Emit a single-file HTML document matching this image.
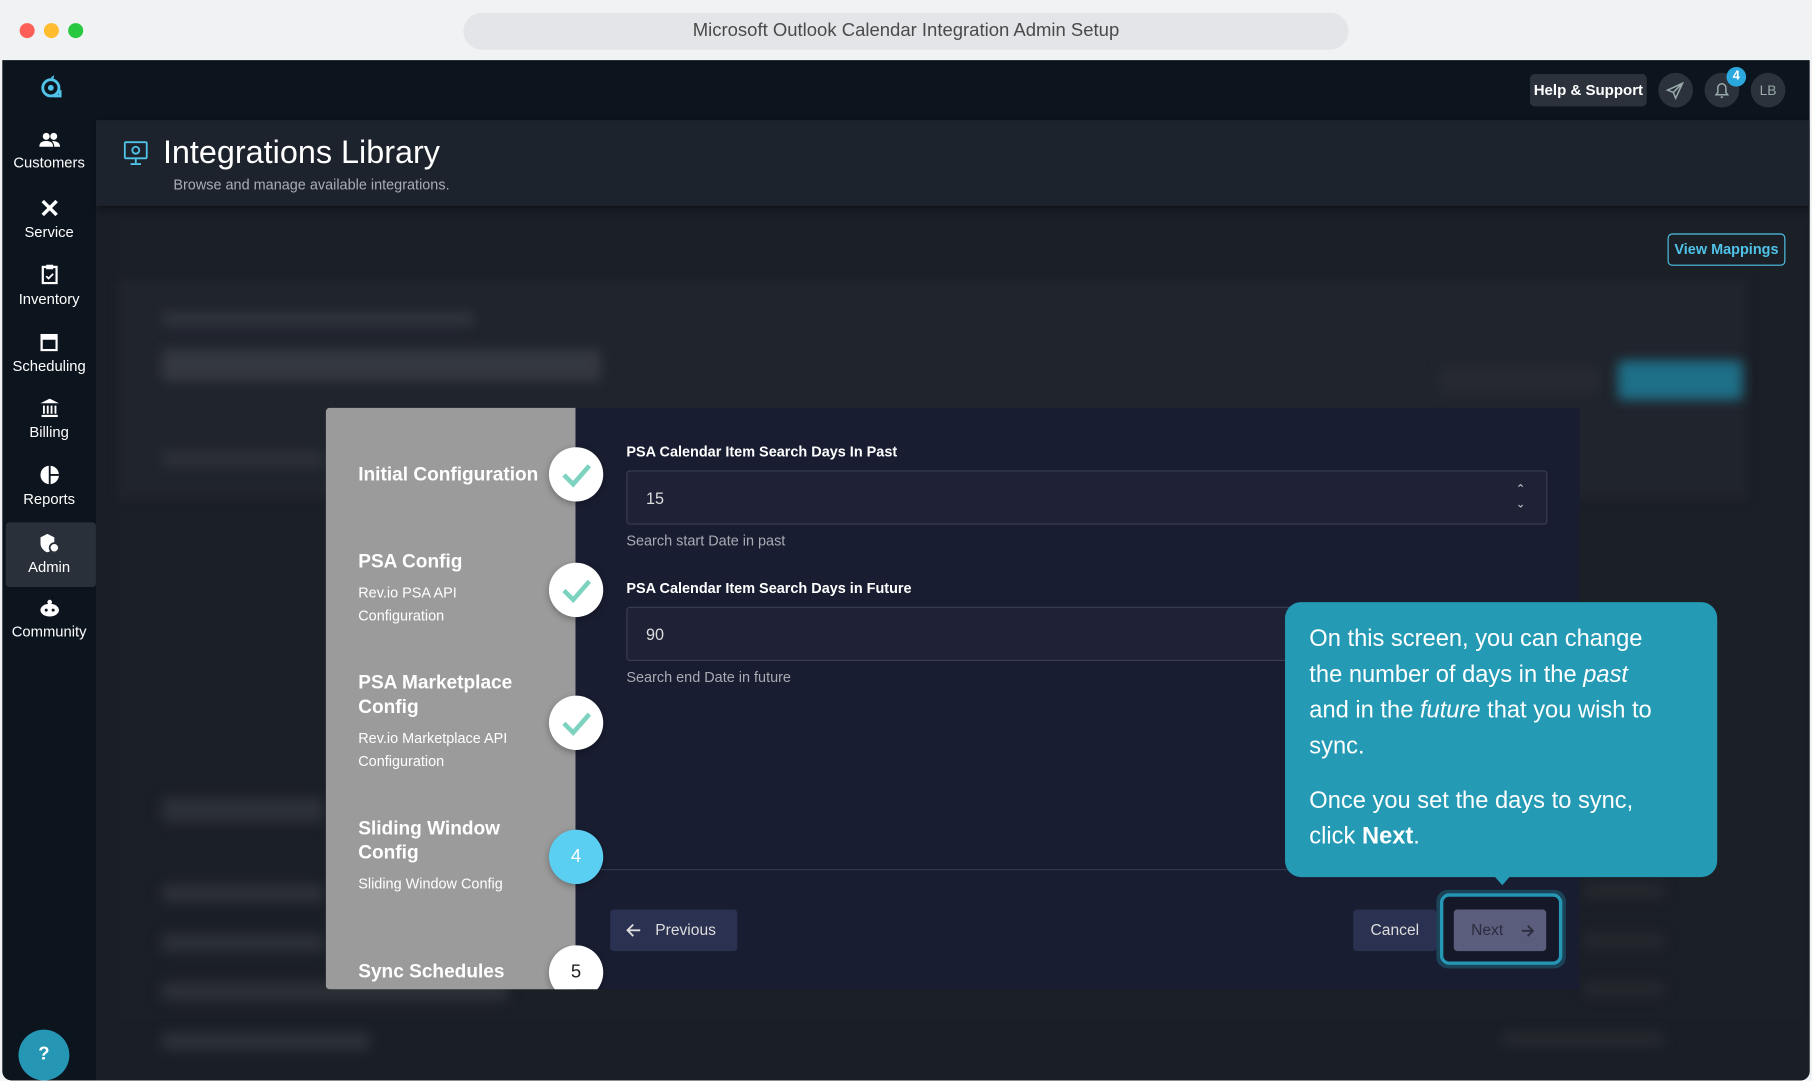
<!DOCTYPE html>
<html><head><meta charset="utf-8"><style>
*{box-sizing:border-box;margin:0;padding:0}
html,body{width:1812px;height:1080px;overflow:hidden;background:#fff}
#w{position:absolute;left:0;top:0;width:1568px;height:935px;transform:scale(1.15561);transform-origin:0 0;font-family:"Liberation Sans",sans-serif;background:#f1f2f4}
.a{position:absolute}
.dot{position:absolute;width:13px;height:13px;border-radius:50%;top:20px}
.nav{position:absolute;left:2px;width:81px;text-align:center;color:#fff;font-size:12.8px}
.nav svg{display:block;margin:0 auto 5px}
.blur{position:absolute;background:#3a3f48;filter:blur(5px);border-radius:4px}
.step{position:absolute;left:310px;color:#fff}
.step b{font-size:16.5px;display:block;line-height:21px}
.step span{font-size:12.5px;display:block;line-height:20px;margin-top:6px}
.circ{position:absolute;left:475px;width:47px;height:47px;border-radius:50%;background:#fff;box-shadow:0 2px 6px rgba(0,0,0,.3);display:flex;align-items:center;justify-content:center;font-size:16px;color:#222}
.lbl{position:absolute;left:542px;color:#fff;font-weight:bold;font-size:12.5px}
.inp{position:absolute;left:542px;width:797px;height:47px;background:#1f2236;border:1px solid #3a3e56;border-radius:3px;color:#ddd;font-size:14px;padding:15px 16px}
.hlp{position:absolute;left:542px;color:#a9abb3;font-size:12.5px}
</style></head><body><div id="w">
<div class="dot" style="left:17px;background:#fe5f57"></div>
<div class="dot" style="left:38px;background:#febc2e"></div>
<div class="dot" style="left:59px;background:#28c840"></div>
<div class="a" style="left:401px;top:11px;width:766px;height:32px;background:#e4e5e8;border-radius:16px;text-align:center;line-height:32px;font-size:16px;color:#4a4a4a">Microsoft Outlook Calendar Integration Admin Setup</div>
<div class="a" style="left:2px;top:52px;width:1564px;height:883px;background:#0c141e;overflow:hidden;border-radius:0 0 8px 8px">
 <div class="a" style="left:81px;top:52px;width:1483px;height:831px;background:#1a1f27"></div>
 <div class="a" style="left:81px;top:52px;width:1483px;height:74px;background:#1d232d;box-shadow:0 3px 6px rgba(0,0,0,.4)"></div>
 <div class="a" style="left:100px;top:140px;width:1460px;height:690px;background:#1b1f26"></div>
 <div class="a" style="left:100px;top:190px;width:1410px;height:190px;background:#20242c;filter:blur(4px)"></div>
</div>
<svg class="a" style="left:34px;top:64px" width="20" height="24" viewBox="0 0 20 24"><circle cx="10" cy="12" r="7" fill="none" stroke="#4fc3e8" stroke-width="2.5"/><circle cx="10" cy="12" r="2.5" fill="#4fc3e8"/><path d="M10 3 L13 1 L12 5Z" fill="#4fc3e8"/><path d="M12 19 H18 V14" fill="none" stroke="#4fc3e8" stroke-width="2.5"/></svg>
<div class="a" style="left:5px;top:452px;width:78px;height:56px;background:#2a3039;border-radius:3px"></div>
<div class="nav" style="top:114px"><svg width="18" height="14" viewBox="0 0 18 14"><circle cx="6" cy="4" r="3" fill="#fff"/><circle cx="12.5" cy="4" r="3" fill="#fff"/><path d="M0 13c0-4 3-5 6-5s6 1 6 5z M11 8c3 0 7 1 7 5h-5c0-2-1-4-2-5z" fill="#fff"/></svg>Customers</div>
<div class="nav" style="top:172px"><svg width="16" height="16" viewBox="0 0 16 16"><path d="M2 2l12 12M14 2L2 14" stroke="#fff" stroke-width="3"/></svg>Service</div>
<div class="nav" style="top:229px"><svg width="14" height="17" viewBox="0 0 14 17"><rect x="1" y="2" width="12" height="14" fill="none" stroke="#fff" stroke-width="2"/><rect x="4" y="0" width="6" height="4" fill="#fff"/><path d="M4 10l2 2 4-4" stroke="#fff" fill="none" stroke-width="1.5"/></svg>Inventory</div>
<div class="nav" style="top:288px"><svg width="15" height="16" viewBox="0 0 15 16"><rect x="1" y="2" width="13" height="13" fill="none" stroke="#fff" stroke-width="2"/><rect x="1" y="2" width="13" height="4" fill="#fff"/></svg>Scheduling</div>
<div class="nav" style="top:345px"><svg width="16" height="16" viewBox="0 0 16 16"><path d="M8 0L0 4h16z M1 14h14v2H1z" fill="#fff"/><path d="M3 6v7M6.3 6v7M9.6 6v7M13 6v7" stroke="#fff" stroke-width="1.6"/></svg>Billing</div>
<div class="nav" style="top:403px"><svg width="16" height="16" viewBox="0 0 16 16"><circle cx="8" cy="8" r="8" fill="#fff"/><path d="M8 0v16M8 8h8" stroke="#0c141e" stroke-width="1.6"/></svg>Reports</div>
<div class="nav" style="top:462px"><svg width="16" height="16" viewBox="0 0 16 16"><path d="M6 0l6 3v5c0 4-3 7-6 8-3-1-6-4-6-8V3z" fill="#fff"/><circle cx="12" cy="12" r="4" fill="#fff" stroke="#2a3039" stroke-width="1.5"/></svg>Admin</div>
<div class="nav" style="top:518px"><svg width="18" height="16" viewBox="0 0 18 16"><ellipse cx="9" cy="10" rx="8" ry="5.5" fill="#fff"/><circle cx="9" cy="3" r="2" fill="#fff"/><circle cx="6" cy="10" r="1.3" fill="#0c141e"/><circle cx="12" cy="10" r="1.3" fill="#0c141e"/></svg>Community</div>
<div class="a" style="left:16px;top:891px;width:44px;height:44px;border-radius:50%;background:#2596b4;color:#fff;font-weight:bold;font-size:16px;text-align:center;line-height:44px">?</div>
<div class="a" style="left:1324px;top:64px;width:101px;height:28px;background:#2c323b;border-radius:4px;color:#fff;font-weight:bold;font-size:13px;text-align:center;line-height:28px">Help &amp; Support</div>
<div class="a" style="left:1435px;top:63px;width:30px;height:30px;border-radius:50%;background:#2c323b"><svg width="30" height="30" viewBox="0 0 30 30"><path d="M21 9L8 15l5 2 2 5z M13 17l8-8" fill="none" stroke="#9aa" stroke-width="1.3"/></svg></div>
<div class="a" style="left:1475px;top:63px;width:30px;height:30px;border-radius:50%;background:#2c323b"><svg width="30" height="30" viewBox="0 0 30 30"><path d="M10 19h10l-1.5-2v-4a3.5 3.5 0 0 0-7 0v4z M14 21h2" fill="none" stroke="#9aa" stroke-width="1.3"/></svg></div>
<div class="a" style="left:1494px;top:58px;width:17px;height:17px;border-radius:50%;background:#2ba8dd;color:#fff;font-size:11px;font-weight:bold;text-align:center;line-height:17px">4</div>
<div class="a" style="left:1515px;top:63px;width:30px;height:30px;border-radius:50%;background:#2c323b;color:#9aa;font-size:12px;text-align:center;line-height:30px">LB</div>
<svg class="a" style="left:107px;top:122px" width="21" height="22" viewBox="0 0 21 22"><rect x="1" y="1" width="19" height="14" rx="1" fill="none" stroke="#4fc3e8" stroke-width="1.6"/><circle cx="10.5" cy="8" r="3" fill="none" stroke="#4fc3e8" stroke-width="1.6"/><path d="M10.5 15v4M6 20h9" stroke="#4fc3e8" stroke-width="1.6"/></svg>
<div class="a" style="left:141px;top:116px;color:#fff;font-size:28px">Integrations Library</div>
<div class="a" style="left:150px;top:153px;color:#a9adb3;font-size:12.5px">Browse and manage available integrations.</div>
<div class="a" style="left:1443px;top:202px;width:102px;height:28px;border:1px solid #4fc3e8;border-radius:4px;color:#4fc3e8;font-weight:bold;font-size:12.5px;text-align:center;line-height:26px">View Mappings</div>
<div class="blur" style="left:140px;top:270px;width:270px;height:12px;background:#30343c"></div>
<div class="blur" style="left:140px;top:302px;width:380px;height:28px;background:#34383f"></div>
<div class="blur" style="left:1245px;top:316px;width:140px;height:26px;background:#262a31"></div>
<div class="blur" style="left:1400px;top:312px;width:108px;height:34px;background:#1e6f88"></div>
<div class="blur" style="left:140px;top:390px;width:140px;height:14px;background:#2c3037"></div>
<div class="blur" style="left:140px;top:690px;width:140px;height:22px;background:#2c3037"></div>
<div class="blur" style="left:140px;top:765px;width:140px;height:16px;background:#2c3037"></div>
<div class="blur" style="left:140px;top:808px;width:140px;height:16px;background:#2c3037"></div>
<div class="blur" style="left:140px;top:850px;width:300px;height:16px;background:#2c3037"></div>
<div class="blur" style="left:140px;top:893px;width:180px;height:16px;background:#2c3037"></div>
<div class="blur" style="left:1370px;top:765px;width:70px;height:12px;background:#26292f"></div>
<div class="blur" style="left:1370px;top:808px;width:70px;height:12px;background:#26292f"></div>
<div class="blur" style="left:1370px;top:850px;width:70px;height:12px;background:#26292f"></div>
<div class="blur" style="left:1300px;top:893px;width:140px;height:12px;background:#26292f"></div>
<div class="a" style="left:282px;top:353px;width:216px;height:503px;background:#9b9b9b;border-radius:3px 0 0 3px"></div>
<div class="a" style="left:498px;top:353px;width:869px;height:503px;background:#191d31"></div>
<div class="step" style="top:401px"><b>Initial Configuration</b></div>
<div class="step" style="top:476px"><b>PSA Config</b><span>Rev.io PSA API<br>Configuration</span></div>
<div class="step" style="top:581px"><b>PSA Marketplace<br>Config</b><span>Rev.io Marketplace API<br>Configuration</span></div>
<div class="step" style="top:707px"><b>Sliding Window<br>Config</b><span>Sliding Window Config</span></div>
<div class="step" style="top:831px"><b>Sync Schedules</b></div>
<div class="circ" style="top:387px"><svg width="28" height="24" viewBox="0 0 28 24"><path d="M3 12l8 8L25 4" fill="none" stroke="#7dd3c0" stroke-width="4"/></svg></div>
<div class="circ" style="top:487px"><svg width="28" height="24" viewBox="0 0 28 24"><path d="M3 12l8 8L25 4" fill="none" stroke="#7dd3c0" stroke-width="4"/></svg></div>
<div class="circ" style="top:602px"><svg width="28" height="24" viewBox="0 0 28 24"><path d="M3 12l8 8L25 4" fill="none" stroke="#7dd3c0" stroke-width="4"/></svg></div>
<div class="circ" style="top:718px;background:#5bcff2;color:#fff">4</div>
<div class="a" style="left:470px;top:818px;width:60px;height:38px;overflow:hidden"><div class="circ" style="left:5px;top:0">5</div></div>
<div class="lbl" style="top:384px">PSA Calendar Item Search Days In Past</div>
<div class="inp" style="top:407px">15<span style="position:absolute;right:18px;top:9px;font-size:10px;line-height:13px;color:#ccc">&#8963;<br>&#8964;</span></div>
<div class="hlp" style="top:461px">Search start Date in past</div>
<div class="lbl" style="top:502px">PSA Calendar Item Search Days in Future</div>
<div class="inp" style="top:525px">90</div>
<div class="hlp" style="top:579px">Search end Date in future</div>
<div class="a" style="left:520px;top:752px;width:847px;height:1px;background:#333751"></div>
<div class="a" style="left:528px;top:787px;width:110px;height:36px;background:#2b3150;border-radius:3px;color:#ddd;font-size:13.5px;line-height:36px;padding-left:39px">Previous<svg style="position:absolute;left:14px;top:12px" width="13" height="12" viewBox="0 0 13 12"><path d="M12 6H2M6 1L1 6l5 5" fill="none" stroke="#ddd" stroke-width="1.6"/></svg></div>
<div class="a" style="left:1171px;top:787px;width:72px;height:36px;background:#2b3150;border-radius:3px;color:#ddd;font-size:13.5px;line-height:36px;text-align:center">Cancel</div>
<div class="a" style="left:1243px;top:770px;width:112px;height:68px;border:3px solid #1c4458;border-radius:10px"></div>
<div class="a" style="left:1246px;top:773px;width:106px;height:62px;border:3px solid #2596b4;border-radius:8px;background:#141829"></div>
<div class="a" style="left:1258px;top:787px;width:80px;height:36px;background:#5a5d7b;border-radius:3px;color:#2a2d3e;font-size:13.5px;line-height:36px;padding-left:15px">Next<svg style="position:absolute;left:58px;top:13px" width="12" height="11" viewBox="0 0 12 11"><path d="M1 5.5h9M6 1l4.5 4.5L6 10" fill="none" stroke="#2a2d3e" stroke-width="1.6"/></svg></div>
<div class="a" style="left:1112px;top:521px;width:374px;height:238px;background:#249ab5;border-radius:14px;color:#fff;font-size:20.5px;line-height:31px;padding:16px 10px 0 21px;white-space:nowrap">On this screen, you can change<br>the number of days in the <i>past</i><br>and in the <i>future</i> that you wish to<br>sync.<div style="margin-top:16px">Once you set the days to sync,<br>click <b>Next</b>.</div></div>
<div class="a" style="left:1293px;top:758px;width:0;height:0;border-left:7px solid transparent;border-right:7px solid transparent;border-top:8px solid #249ab5"></div>
</div></body></html>
